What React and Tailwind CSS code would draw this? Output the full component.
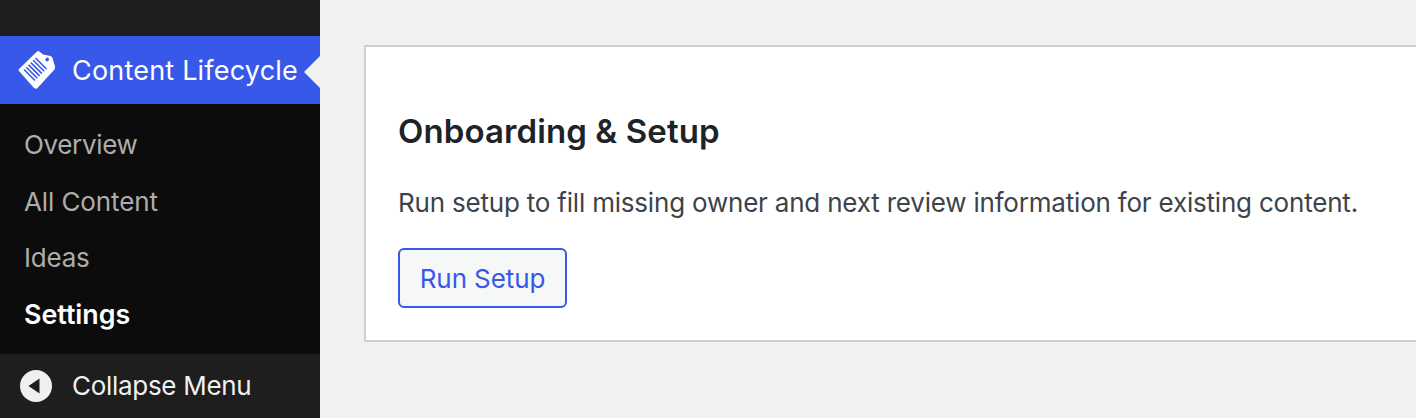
export default function App() {
  const items = [
    ["Overview", "text-[26px] font-normal tracking-[-0.35px] text-[#adadad]"],
    ["All Content", "text-[26px] font-normal tracking-[-0.1px] text-[#adadad]"],
    ["Ideas", "text-[26px] font-normal tracking-[-0.2px] text-[#adadad]"],
    ["Settings", "text-[26.8px] font-semibold text-white"],
  ];
  return (
    <div className="flex h-[418px] w-[1416px] overflow-hidden bg-[#f1f1f1] font-['Inter',sans-serif]">
      <aside className="flex w-[320px] shrink-0 flex-col bg-[#1e1e1e]">
        <div className="h-[36px]" />
        <div className="relative flex h-[68px] items-center bg-[#3858e9] pl-[18px] text-white">
          <svg width="38" height="40" viewBox="0 0 38 40" className="shrink-0">
            <path fill="#fff" fillRule="evenodd" d="M19 1.5 1 19Q0 20 1 21L16 38Q18 39.5 19.5 38L36 20Q37.5 18.5 37 16.5L34.5 8Q34 6.5 32.5 6L25 4.5 21.5 1.5Q20 .5 19 1.5ZM30.7 8.5a1.8 1.8 0 1 1-3 2 1.8 1.8 0 0 1 3-2Z" />
            <g stroke="#3858e9" strokeWidth="1.6" fill="none">
              <path d="M17.5 8 28.5 19" />
              <path d="M15.2 10.3 26.2 21.3" />
              <path d="M12.9 12.6 23.9 23.6" />
              <path d="M10.6 14.9 21.6 25.9" />
              <path d="M8.3 17.2 19.3 28.2" />
              <path d="M6 19.5 17 30.5" />
            </g>
          </svg>
          <span className="ml-[16px] text-[27px] leading-none font-normal tracking-[0.2px] whitespace-nowrap">Content Lifecycle</span>
          <div className="absolute right-0 top-[20px] h-0 w-0 border-y-[16px] border-r-[16px] border-y-transparent border-r-[#f1f1f1]" />
        </div>
        <nav className="flex h-[250px] flex-col bg-[#0c0c0c] pt-[13px]">
          {items.map(([label, cls]) => (
            <div key={label} className={`flex h-[56.4px] items-center pl-[24px] leading-none ${cls}`}>
              {label}
            </div>
          ))}
        </nav>
        <div className="flex flex-1 items-center pl-[20px] text-[#f0f0f1]">
          <svg width="32" height="32" viewBox="0 0 32 32" className="shrink-0">
            <circle cx="16" cy="16" r="16" fill="#f0f0f1" />
            <path d="M8.5 16 19.5 8.5V23.5Z" fill="#1e1e1e" />
          </svg>
          <span className="ml-[20px] text-[26px] leading-none tracking-[-0.3px] whitespace-nowrap">Collapse Menu</span>
        </div>
      </aside>
      <main className="min-w-0 flex-1 pl-[44px] pt-[45px]">
        <section className="h-[297px] w-[1100px] border-2 border-[#ccd0d4] bg-white pl-[32px] pt-[64px]">
          <h1 className="text-[33px] leading-[40px] font-semibold tracking-[0.1px] text-[#1d2327]">Onboarding &amp; Setup</h1>
          <p className="mt-[36px] text-[26px] leading-[32px] tracking-[-0.2px] whitespace-nowrap text-[#3c434a]">
            Run setup to fill missing owner and next review information for existing content.
          </p>
          <button className="mt-[29px] flex h-[60px] w-[169px] items-center justify-center rounded-[6px] border-2 border-[#3858e9] bg-[#f6f7f7] pt-[2px] text-[26px] leading-none tracking-[-0.1px] text-[#3858e9]">
            Run Setup
          </button>
        </section>
      </main>
    </div>
  );
}
